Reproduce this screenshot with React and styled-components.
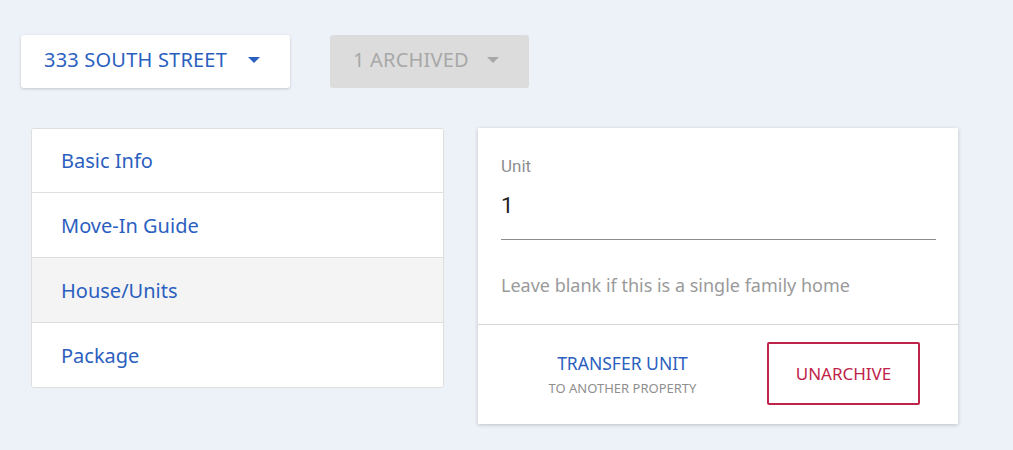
import React from "react";
import styled, { createGlobalStyle } from "styled-components";

const GlobalStyle = createGlobalStyle`
  body {
    margin: 0;
    background: #edf1f8;
    font-family: "Noto Sans", "Open Sans", sans-serif;
  }
`;

const Page = styled.div`
  width: 1013px;
  height: 450px;
  padding: 35px 0 0 21px;
  box-sizing: border-box;
`;

const Toolbar = styled.div`
  display: flex;
  gap: 40px;
  margin-bottom: 40px;
`;

const Select = styled.div`
  display: flex;
  align-items: center;
  height: 53px;
  box-sizing: border-box;
  padding: 0 30px 4px 23px;
  width: ${(p) => p.width}px;
  justify-content: space-between;
  border-radius: 3px;
  background: ${(p) => (p.disabled ? "#dcdcdc" : "#fff")};
  color: ${(p) => (p.disabled ? "#a8a8a8" : "#2b5fbf")};
  box-shadow: ${(p) => (p.disabled ? "none" : "0 1px 3px rgba(0,0,0,0.18)")};
  font-size: 20px;
  letter-spacing: 0.2px;
`;

const Caret = styled.span`
  width: 0;
  height: 0;
  border-left: 6px solid transparent;
  border-right: 6px solid transparent;
  border-top: 6px solid currentColor;
`;

const Content = styled.div`
  display: flex;
  align-items: flex-start;
  gap: 34px;
  padding-left: 10px;
`;

const Nav = styled.div`
  width: 413px;
  background: #fff;
  border: 1px solid #dedede;
  border-radius: 3px;
  box-sizing: border-box;
  overflow: hidden;
`;

const NavItem = styled.div`
  height: ${(p) => (p.first ? 63 : 64)}px;
  display: flex;
  align-items: center;
  padding-left: 29px;
  font-size: 20px;
  color: #2b5fbf;
  background: ${(p) => (p.active ? "#f4f4f4" : "#fff")};
  border-top: ${(p) => (p.first ? "none" : "1px solid #dedede")};
`;

const Card = styled.div`
  width: 480px;
  background: #fff;
  box-shadow: 0 1px 4px rgba(0, 0, 0, 0.2);
`;

const Fields = styled.div`
  padding: 28px 22px 26px 23px;
  border-bottom: 1px solid #d6d6d6;
`;

const Label = styled.div`
  font-family: Roboto, sans-serif;
  font-size: 17px;
  line-height: 20px;
  color: #8f8f8f;
`;

const Value = styled.div`
  font-family: Roboto, sans-serif;
  font-size: 22px;
  line-height: 26px;
  color: #222;
  margin-top: 17px;
  padding-bottom: 20px;
  border-bottom: 1px solid #8c8c8c;
`;

const Helper = styled.div`
  margin-top: 33px;
  font-size: 18px;
  line-height: 25px;
  color: #9a9a9a;
`;

const Actions = styled.div`
  display: flex;
  align-items: center;
  padding: 17px 38px 19px 0;
`;

const Transfer = styled.div`
  flex: 1;
  text-align: center;
`;

const TransferTitle = styled.div`
  font-size: 17.5px;
  line-height: 24px;
  color: #2b5fbf;
`;

const TransferSub = styled.div`
  font-size: 13px;
  line-height: 18px;
  color: #8f8f8f;
  margin-top: 4px;
`;

const OutlineButton = styled.div`
  width: 153px;
  height: 63px;
  box-sizing: border-box;
  border: 2px solid #c0234a;
  border-radius: 2px;
  display: flex;
  align-items: center;
  justify-content: center;
  color: #c0234a;
  font-size: 17px;
`;

const navItems = ["Basic Info", "Move-In Guide", "House/Units", "Package"];

export default function App() {
  return (
    <>
      <GlobalStyle />
      <Page>
        <Toolbar>
          <Select width={269}>
            333 SOUTH STREET
            <Caret />
          </Select>
          <Select width={199} disabled>
            1 ARCHIVED
            <Caret />
          </Select>
        </Toolbar>
        <Content>
          <Nav>
            {navItems.map((item, i) => (
              <NavItem key={item} first={i === 0} active={item === "House/Units"}>
                {item}
              </NavItem>
            ))}
          </Nav>
          <Card>
            <Fields>
              <Label>Unit</Label>
              <Value>1</Value>
              <Helper>Leave blank if this is a single family home</Helper>
            </Fields>
            <Actions>
              <Transfer>
                <TransferTitle>TRANSFER UNIT</TransferTitle>
                <TransferSub>TO ANOTHER PROPERTY</TransferSub>
              </Transfer>
              <OutlineButton>UNARCHIVE</OutlineButton>
            </Actions>
          </Card>
        </Content>
      </Page>
    </>
  );
}
